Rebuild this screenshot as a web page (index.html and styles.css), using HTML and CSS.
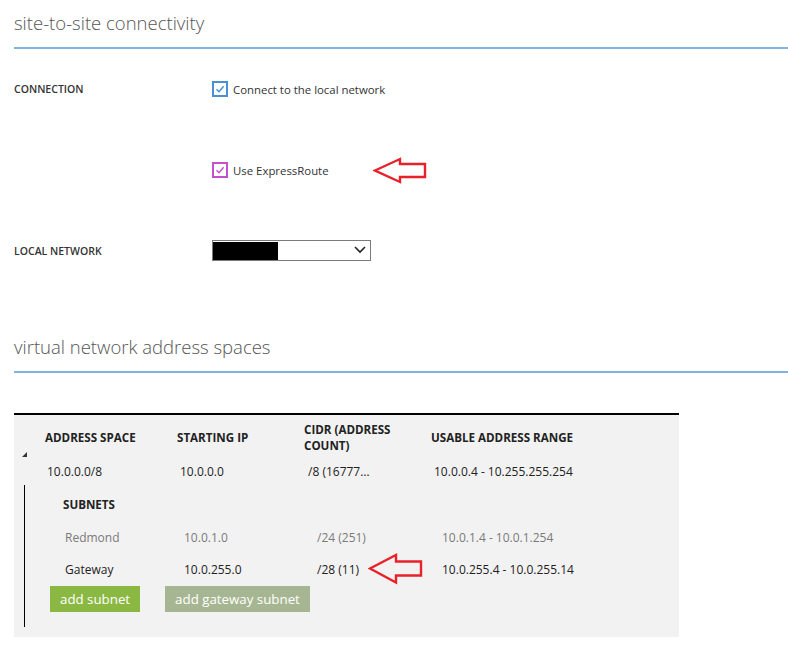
FILE: index.html
```html
<!DOCTYPE html>
<html>
<head>
<meta charset="utf-8">
<link rel="stylesheet" href="styles.css">
</head>
<body>
<div class="page">
  <h1 class="section-title">site-to-site connectivity</h1>

  <div class="form-row row-connection">
    <div class="field-label">CONNECTION</div>
    <label class="check">
      <span class="box box-blue"><svg viewBox="0 0 16 16" width="16" height="16"><path d="M4.5 8.2 L7 10.7 L11.6 5.2" fill="none" stroke="#3b8ed6" stroke-width="1.4"/></svg></span>
      <span class="check-text">Connect to the local network</span>
    </label>
  </div>

  <div class="form-row row-express">
    <div class="field-label"></div>
    <label class="check">
      <span class="box box-magenta"><svg viewBox="0 0 16 16" width="16" height="16"><path d="M4.5 8.2 L7 10.7 L11.6 5.2" fill="none" stroke="#c64fcc" stroke-width="1.4"/></svg></span>
      <span class="check-text">Use ExpressRoute</span>
    </label>
    <svg class="arrow arrow-one" width="54" height="27" viewBox="0 0 54 27"><polygon points="2,13.5 27,2 27,7 52,7 52,20 27,20 27,25" fill="none" stroke="#e8212a" stroke-width="2.4" stroke-linejoin="miter"/></svg>
  </div>

  <div class="form-row row-local">
    <div class="field-label">LOCAL NETWORK</div>
    <div class="select">
      <span class="redacted"></span>
      <svg class="chevron" width="12" height="8" viewBox="0 0 12 8"><polyline points="1,1 6,6 11,1" fill="none" stroke="#222" stroke-width="1.6"/></svg>
    </div>
  </div>

  <h1 class="section-title title-two">virtual network address spaces</h1>

  <div class="table">
    <div class="thead">
      <div class="gutter"><span class="expander"></span></div>
      <div class="th">ADDRESS SPACE</div>
      <div class="th">STARTING IP</div>
      <div class="th">CIDR (ADDRESS<br>COUNT)</div>
      <div class="th">USABLE ADDRESS RANGE</div>
    </div>
    <div class="trow">
      <div class="gutter"></div>
      <div class="td c1">10.0.0.0/8</div>
      <div class="td c2">10.0.0.0</div>
      <div class="td c3">/8 (16777…</div>
      <div class="td c4">10.0.0.4 - 10.255.255.254</div>
    </div>
    <div class="subnets">
      <div class="subnets-title">SUBNETS</div>
      <div class="srow muted">
        <div>Redmond</div>
        <div>10.0.1.0</div>
        <div>/24 (251)</div>
        <div>10.0.1.4 - 10.0.1.254</div>
      </div>
      <div class="srow">
        <div>Gateway</div>
        <div>10.0.255.0</div>
        <div class="cidr-cell">/28 (11)<svg class="arrow arrow-two" width="55" height="32" viewBox="0 0 55 32"><polygon points="2,15.5 28,2 28,8.5 53,8.5 53,22.5 28,22.5 28,29.5" fill="none" stroke="#e8212a" stroke-width="2.4"/></svg></div>
        <div>10.0.255.4 - 10.0.255.14</div>
      </div>
      <div class="buttons">
        <button class="btn btn-green">add subnet</button>
        <button class="btn btn-sage">add gateway subnet</button>
      </div>
    </div>
  </div>
</div>
</body>
</html>
```

FILE: styles.css
```css
html, body {
  margin: 0;
  padding: 0;
  background: #fff;
}
body {
  font-family: "Open Sans", "Liberation Sans", sans-serif;
  color: #333;
}
.page {
  padding-left: 14px;
  padding-top: 11px;
}
.section-title {
  margin: 0;
  font-size: 18.5px;
  font-weight: 300;
  line-height: 24px;
  color: #555;
  padding-bottom: 12px;
  border-bottom: 2px solid #7fb3e1;
}
.title-two {
  margin-top: 74px;
}
.form-row {
  display: flex;
  align-items: center;
}
.field-label {
  width: 198px;
  flex: none;
  font-size: 10.5px;
  font-weight: 600;
  color: #333;
}
.row-connection {
  margin-top: 32px;
  height: 16px;
}
.row-express {
  margin-top: 65px;
  height: 16px;
}
.row-local {
  margin-top: 62px;
  height: 21px;
}
.check {
  display: flex;
  align-items: center;
}
.box {
  width: 16px;
  height: 16px;
  box-sizing: border-box;
  border: 2px solid #4a90d2;
  background: #fff;
  position: relative;
  flex: none;
}
.box svg {
  position: absolute;
  left: -2px;
  top: -2px;
}
.box-magenta {
  border-color: #c64fcc;
}
.check-text {
  margin-left: 5px;
  font-size: 11.4px;
  color: #333;
}
.arrow-one {
  margin-left: 44px;
  flex: none;
}
.select {
  width: 159px;
  height: 21px;
  box-sizing: border-box;
  border: 1px solid #7a7a7a;
  display: flex;
  align-items: center;
  justify-content: space-between;
  padding: 1px 4px 0 0;
}
.redacted {
  width: 65px;
  height: 18px;
  background: #000;
}
.chevron {
  margin-top: -2px;
}
.table {
  margin-top: 40px;
  width: 665px;
  background: #f2f2f2;
  border-top: 2px solid #000;
  padding-bottom: 10px;
}
.thead, .trow {
  display: grid;
  grid-template-columns: 31px 132px 127px 127px 1fr;
}
.thead {
  padding-top: 7px;
}
.th {
  font-size: 11.6px;
  font-weight: 700;
  line-height: 16px;
  color: #222;
  align-self: center;
}
.gutter {
  display: flex;
  align-items: flex-end;
}
.expander {
  width: 0;
  height: 0;
  margin-left: 8px;
  margin-bottom: -3px;
  border-left: 5px solid transparent;
  border-bottom: 5px solid #333;
}
.trow {
  padding-top: 10px;
}
.td {
  font-size: 12px;
  line-height: 16px;
  color: #222;
}
.c1 { padding-left: 2px; }
.c2 { padding-left: 3px; }
.c3 { padding-left: 4px; }
.c4 { padding-left: 3px; }
.subnets {
  margin-top: 5px;
  margin-left: 10px;
  border-left: 1px solid #000;
  padding-top: 12px;
  padding-bottom: 15px;
}
.subnets-title {
  padding-left: 38px;
  font-size: 11.6px;
  font-weight: 700;
  line-height: 16px;
  color: #222;
}
.srow {
  margin-top: 8px;
  display: grid;
  grid-template-columns: 40px 119px 133px 125px 1fr;
  height: 32px;
  align-items: center;
  font-size: 12px;
  color: #222;
}
.srow + .srow { margin-top: 0; }
.srow > div:first-child { grid-column: 2; }
.srow.muted { color: #7a7a7a; }
.cidr-cell {
  display: flex;
  align-items: center;
}
.arrow-two {
  margin-left: 9px;
  flex: none;
}
.buttons {
  display: flex;
  gap: 25px;
  padding-left: 25px;
  margin-top: 1px;
}
.btn {
  font-family: "Open Sans", "Liberation Sans", sans-serif;
  font-size: 13.3px;
  color: #fff;
  border: none;
  height: 26px;
  padding: 0 10px;
  margin: 0;
  line-height: 26px;
}
.btn-green { background: #8ab843; }
.btn-sage { background: #a7b692; }
```
